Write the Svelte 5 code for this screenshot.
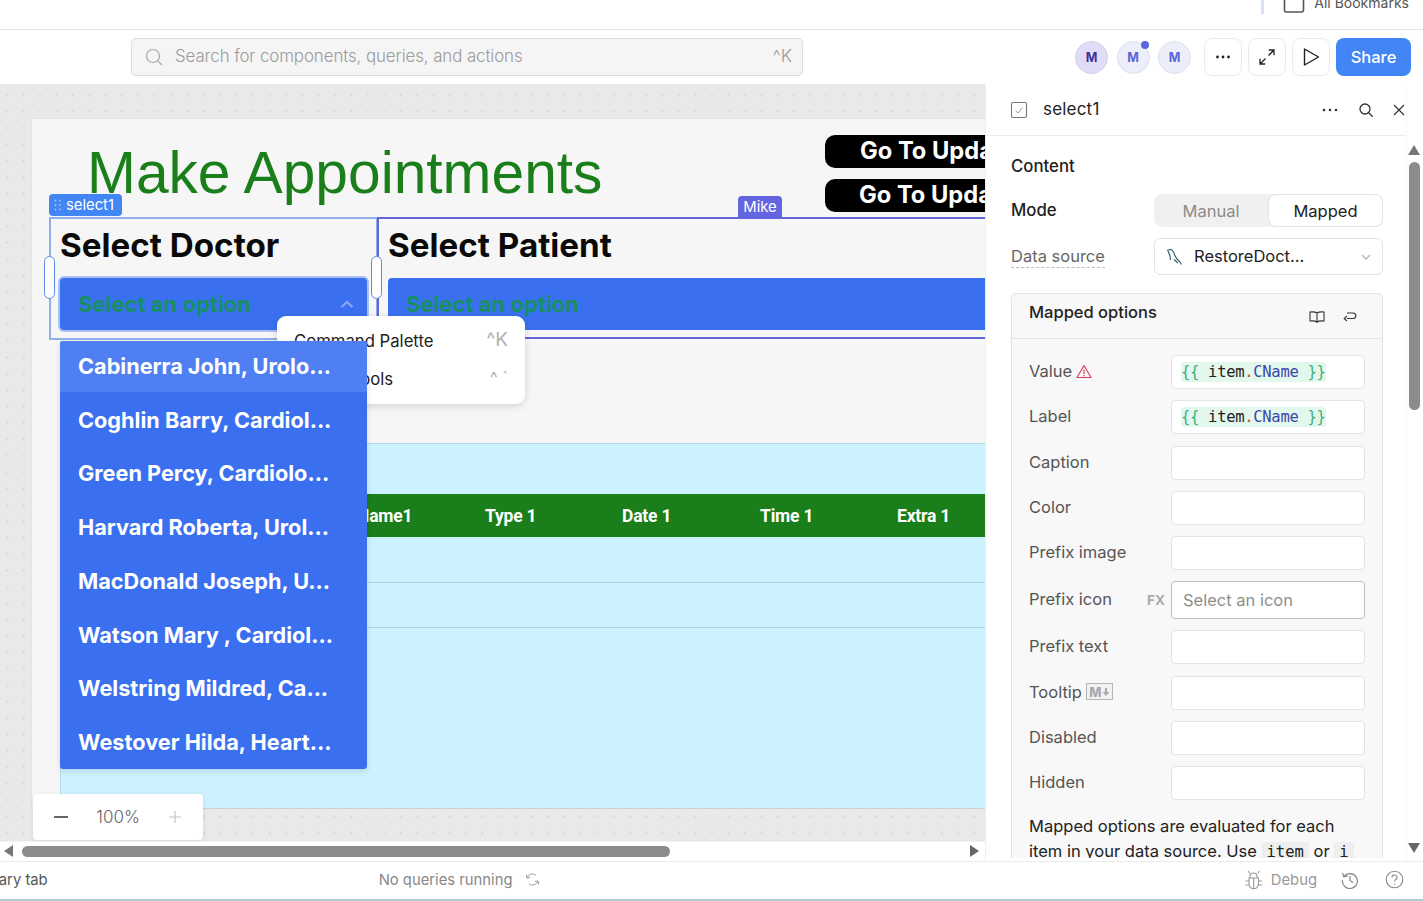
<script>
  const doctors = ['Cabinerra John, Urolo...','Coghlin Barry, Cardiol...','Green Percy, Cardiolo...','Harvard Roberta, Urol...','MacDonald Joseph, U...','Watson Mary , Cardiol...','Welstring Mildred, Ca...','Westover Hilda, Heart...'];
  const cols = [['Name1',357],['Type 1',485],['Date 1',622],['Time 1',760],['Extra 1',897]];
  const rows = ['Caption','Color','Prefix image'];
  const rows2 = ['Disabled','Hidden'];
</script>

<div class="page">
  <div class="browser">
    <div class="bm-sep"></div>
    <svg class="bm-ico" width="22" height="14" viewBox="0 0 22 14"><path d="M1.500 0v10a2 2 0 0 0 2 2h15a2 2 0 0 0 2-2V0" fill="none" stroke="#555" stroke-width="1.600"/></svg>
    <span class="bm-text">All Bookmarks</span>
  </div>

  <header class="top">
    <div class="search">
      <svg width="20" height="20" viewBox="0 0 20 20" fill="none" stroke="#a8a8a8" stroke-width="1.200"><circle cx="9" cy="9" r="6.500"/><path d="M13.800 13.800 18 18"/></svg>
      <span class="s-text">Search for components, queries, and actions</span>
      <span class="s-key">^K</span>
    </div>
    <div class="avatars">
      <div class="av av1">M</div>
      <div class="av av2">M<i class="dot"></i></div>
      <div class="av av2">M</div>
    </div>
    <div class="tools">
      <button class="tb"><svg width="16" height="4" viewBox="0 0 16 4" fill="#222"><circle cx="2.500" cy="2" r="1.400"/><circle cx="8" cy="2" r="1.400"/><circle cx="13.500" cy="2" r="1.400"/></svg></button>
      <button class="tb"><svg width="18" height="18" viewBox="0 0 18 18" fill="none" stroke="#222" stroke-width="1.300"><path d="M2 16 7.500 10.500M10.500 7.500 16 2M10.800 2H16V7.200M2 10.800V16H7.200"/></svg></button>
      <button class="tb"><svg width="18" height="20" viewBox="0 0 18 20" fill="none" stroke="#222" stroke-width="1.400" stroke-linejoin="round"><path d="M2.500 2v16L16.500 10z"/></svg></button>
      <button class="share">Share</button>
    </div>
  </header>

  <div class="main">
    <div class="left">
      <div class="canvas">
        <div class="frame"></div>
        <div class="title">Make Appointments</div>
        <div class="go go1"><span>Go To Update Appointment</span></div>
        <div class="go go2"><span>Go To Update Patient Info</span></div>

        <div class="box doc-box">
          <div class="h-sel">Select Doctor</div>
        </div>
        <div class="box pat-box">
          <div class="h-sel">Select Patient</div>
        </div>

        <div class="sel sel-doc">
          <span>Select an option</span>
          <svg width="14" height="8" viewBox="0 0 14 8" fill="none" stroke="#8aa8f0" stroke-width="2.200"><path d="M1.500 7 7 2l5.500 5"/></svg>
        </div>
        <div class="sel sel-pat"><span>Select an option</span></div>

        <div class="tag tag-sel">
          <svg width="8" height="12" viewBox="0 0 8 12" fill="#a9c4f7"><circle cx="1.500" cy="1.500" r=".9"/><circle cx="6" cy="1.500" r=".9"/><circle cx="1.500" cy="6" r=".9"/><circle cx="6" cy="6" r=".9"/><circle cx="1.500" cy="10.500" r=".9"/><circle cx="6" cy="10.500" r=".9"/></svg>
          select1
        </div>
        <div class="tag tag-mike">Mike</div>
        <div class="handle h1"></div>
        <div class="handle h2"></div>

        <div class="table">
          <div class="thead">
            {#each cols as c}<span style="left:{c[1] - 60}px">{c[0]}</span>{/each}
          </div>
          <div class="tline l1"></div>
          <div class="tline l2"></div>
        </div>

        <div class="menu">
          <div class="mi"><span>Command Palette</span><em>^K</em></div>
          <div class="mi"><span>Debug Tools</span><em class="small">^ `</em></div>
        </div>

        <div class="drop">
          {#each doctors as d, i}
            <div class="opt" class:first={i === 0}>{d}</div>
          {/each}
        </div>

        <div class="zoom">
          <svg width="14" height="2" viewBox="0 0 14 2"><rect width="14" height="2" fill="#666"/></svg>
          <span>100%</span>
          <svg width="14" height="14" viewBox="0 0 14 14" stroke="#c4c4c4" stroke-width="1.200"><path d="M7 1v12M1 7h12"/></svg>
        </div>
      </div>
      <div class="hscroll">
        <i class="arr-l"></i>
        <div class="hthumb"></div>
        <i class="arr-r"></i>
      </div>
    </div>

    <aside class="panel">
      <div class="p-scroll">
        <div class="p-head">
          <svg width="18" height="18" viewBox="0 0 18 18" fill="none"><rect x="1.500" y="1.500" width="15" height="15" rx="1.500" stroke="#777" stroke-width="1.100"/><path d="M5.500 9.500 8 12l4.500-5.500" stroke="#999" stroke-width="1"/></svg>
          <span class="p-name">select1</span>
          <svg width="16" height="4" viewBox="0 0 16 4" fill="#333"><circle cx="2" cy="2" r="1.300"/><circle cx="8" cy="2" r="1.300"/><circle cx="14" cy="2" r="1.300"/></svg>
          <svg class="ph-search" width="16" height="16" viewBox="0 0 16 16" fill="none" stroke="#333" stroke-width="1.300"><circle cx="7" cy="7" r="5"/><path d="m10.700 10.700 4 4"/></svg>
          <svg class="ph-x" width="12" height="12" viewBox="0 0 12 12" fill="none" stroke="#333" stroke-width="1.200"><path d="m1 1 10 10M11 1 1 11"/></svg>
        </div>
        <div class="p-body">
          <div class="sec">Content</div>
          <div class="line mode">
            <span class="lb-dark">Mode</span>
            <div class="seg"><span class="seg-off">Manual</span><span class="seg-on">Mapped</span></div>
          </div>
          <div class="line ds">
            <span class="lb-dash">Data source</span>
            <div class="ds-sel">
              <svg width="18" height="20" viewBox="0 0 18 20" fill="none" stroke="#2f5d6b" stroke-width="1.100"><path d="M2 3.500 5.500 2.500c2 .5 3.200 2.500 4 5 .8 2.500 2.500 5 5 7l2 3M3 4l2 5 .5 4M9 12.500l4 3.500"/></svg>
              <span>RestoreDoct...</span>
              <svg class="chev" width="10" height="6" viewBox="0 0 10 6" fill="none" stroke="#b5b5b5" stroke-width="1.300"><path d="m1 1 4 4 4-4"/></svg>
            </div>
          </div>

          <div class="mapped">
            <div class="m-head">
              <span>Mapped options</span>
              <svg class="m-book" width="16" height="14" viewBox="0 0 16 14" fill="none" stroke="#333" stroke-width="1.100"><path d="M8 3C6.500 1.800 3.500 1.800 1 2v9c2.500-.2 5.500-.2 7 1 1.500-1.200 4.500-1.200 7-1V2c-2.500-.2-5.500-.2-7 1zM8 3v10"/></svg>
              <svg width="14" height="12" viewBox="0 0 14 12" fill="none" stroke="#333" stroke-width="1.100"><path d="M4 7.500H10.500a2.800 2.800 0 0 0 0-5.500H4M4 5 1.200 7.500 4 10"/></svg>
            </div>
            <div class="m-body">
              <div class="row r-code">
                <span class="lab">Value
                  <svg width="16" height="15" viewBox="0 0 16 15" fill="none" stroke="#d8405e" stroke-width="1.200"><path d="M8 1.500 1 13.500h14z" stroke-linejoin="round"/><path d="M8 5.500v4.500M8 11v1.200"/></svg>
                </span>
                <div class="inp"><code class="tpl"><b>&#123;&#123;</b> item<s>.</s><u>CName</u> <b>&#125;&#125;</b></code></div>
              </div>
              <div class="row r-code">
                <span class="lab">Label</span>
                <div class="inp"><code class="tpl"><b>&#123;&#123;</b> item<s>.</s><u>CName</u> <b>&#125;&#125;</b></code></div>
              </div>
              {#each rows as r}
                <div class="row"><span class="lab">{r}</span><div class="inp"></div></div>
              {/each}
              <div class="row r-icon">
                <span class="lab">Prefix icon</span>
                <span class="fx">FX</span>
                <div class="inp inp-icon">Select an icon</div>
              </div>
              <div class="row"><span class="lab">Prefix text</span><div class="inp"></div></div>
              <div class="row">
                <span class="lab">Tooltip
                  <span class="md">M<svg width="8" height="10" viewBox="0 0 8 10" fill="#aaa"><path d="M3 1h2v4h2.500L4 9 .5 5H3z"/></svg></span>
                </span>
                <div class="inp"></div>
              </div>
              {#each rows2 as r}
                <div class="row"><span class="lab">{r}</span><div class="inp"></div></div>
              {/each}
              <p class="note">Mapped options are evaluated for each item in your data source. Use <code>item</code> or <code>i</code></p>
            </div>
          </div>
        </div>
      </div>
      <div class="vscroll">
        <i class="arr-u"></i>
        <div class="vthumb"></div>
        <i class="arr-d"></i>
      </div>
    </aside>
  </div>

  <footer class="foot">
    <span class="f-left">Primary tab</span>
    <span class="f-q">No queries running</span>
    <svg class="f-sync" width="15" height="15" viewBox="0 0 15 15" fill="none" stroke="#999" stroke-width="1"><path d="M2 6c.8-2.500 3-4 5.500-4 1.500 0 2.500.5 3.500 1.500M1.500 2.500 2 6l3-.5M13 9c-.8 2.500-3 4-5.500 4-1.500 0-2.500-.5-3.500-1.500M13.500 12.500 13 9l-3 .5"/></svg>
    <span class="f-grow"></span>
    <svg width="19" height="20" viewBox="0 0 19 20" fill="none" stroke="#999" stroke-width="1.100"><path d="M5 8h9.500v6a4.700 4.700 0 0 1-9.500 0zM6 8V6.500a3.500 3.500 0 0 1 7 0V8M9.700 8v11M5 11H1.500M14.500 11H18M5 15H1.500M14.500 15H18M6 3.500 4 1M13.500 3.500 15.500 1"/></svg>
    <span class="f-debug">Debug</span>
    <svg class="f-hist" width="18" height="18" viewBox="0 0 18 18" fill="none" stroke="#888" stroke-width="1.200"><path d="M3 5.500A7.500 7.500 0 1 1 1.500 9M1.500 2l1.300 3.800 3.800-.6M9 5v4.500l3 2"/></svg>
    <svg class="f-help" width="19" height="19" viewBox="0 0 19 19" fill="none" stroke="#888" stroke-width="1.100"><circle cx="9.500" cy="9.500" r="8.300"/><path d="M7 7.500a2.500 2.500 0 1 1 3.600 2.200c-.8.400-1.100.9-1.100 1.800M9.500 13.500v1.200"/></svg>
  </footer>
</div>

<style>
  :global(body) { margin: 0; background: #fff; }
  .page { width: 1423px; height: 901px; overflow: hidden; display: flex; flex-direction: column; font-family: Inter, "Liberation Sans", sans-serif; color: #222; position: relative; }

  .browser { flex: none; height: 29px; border-bottom: 1px solid #e4e4e4; display: flex; justify-content: flex-end; align-items: flex-start; padding-right: 14px; box-sizing: content-box; overflow: hidden; }
  .bm-sep { width: 3px; height: 14px; background: #d5e2f7; margin-right: 19px; }
  .bm-ico { margin-right: 9px; }
  .bm-text { font-size: 14px; line-height: 14px; margin-top: -4px; color: #555; }

  .top { flex: none; height: 54px; display: flex; align-items: center; box-sizing: border-box; padding: 0 0 0 131px; }
  .search { flex: none; width: 672px; height: 38px; box-sizing: border-box; background: #f5f5f5; border: 1px solid #dcdcdc; border-radius: 5px; display: flex; align-items: center; padding: 0 10px 0 12px; gap: 11px; color: #9b9b9b; font-weight: 300; }
  .s-text { flex: 1; font-size: 16.900px; letter-spacing: -.1px; margin-top: -2px; }
  .s-key { font-size: 17.500px; color: #999; margin-top: -3px; }
  .avatars { flex: none; display: flex; gap: 8.500px; margin-left: 272px; }
  .av { width: 33px; height: 33px; box-sizing: border-box; border-radius: 50%; display: flex; align-items: center; justify-content: center; font-size: 12.500px; font-weight: 700; position: relative; }
  .av1 { background: #e0dcf7; border: 1px solid #d2cfe6; color: #3f2f96; }
  .av2 { background: #eceef9; border: 1px solid #dde0ee; color: #5b63d8; }
  .dot { position: absolute; width: 8px; height: 8px; border-radius: 50%; background: #5d64e0; right: 0; top: -1px; }
  .tools { flex: none; display: flex; gap: 6px; margin-left: 13px; }
  .tb { width: 38px; height: 38px; box-sizing: border-box; background: #fff; border: 1px solid #eaeaea; border-radius: 8px; display: flex; align-items: center; justify-content: center; padding: 0; }
  .share { width: 75px; height: 38px; border: 0; border-radius: 8px; background: #4285f4; color: #fff; font: 500 16.500px Inter, sans-serif; padding: 0 0 1px; }

  .main { flex: 1; display: flex; min-height: 0; }
  .left { flex: 1; min-width: 0; display: flex; flex-direction: column; }
  .canvas { flex: 1; position: relative; overflow: hidden; background-color: #e9e9e9; background-image: radial-gradient(circle, #d8d8d8 0.9px, transparent 1.300px); background-size: 16.400px 16.400px; background-position: -1px 3px; }
  .hscroll { height: 20px; background: #fff; position: relative; border-top: 1px solid #f3f3f3; box-sizing: border-box; }
  .hthumb { position: absolute; left: 22px; top: 4px; width: 648px; height: 11px; border-radius: 6px; background: #8c8c8c; }
  .arr-l { position: absolute; left: 4px; top: 3px; border: 6px solid transparent; border-left: 0; border-right: 9px solid #777; }
  .arr-r { position: absolute; left: 970px; top: 3px; border: 6px solid transparent; border-right: 0; border-left: 9px solid #666; }

  .frame { position: absolute; left: 31px; top: 34px; width: 960px; height: 690px; background: #f6f6f6; border: 1px solid #e5e5e5; box-sizing: border-box; }
  .title { position: absolute; left: 87px; top: 54px; font: 400 58.700px/70px "Liberation Sans", Arial, sans-serif; color: #1a7f1a; white-space: nowrap; }
  .go { position: absolute; left: 825px; width: 400px; height: 33px; background: #000; border-radius: 10px; color: #fff; font-weight: 700; font-size: 23.700px; line-height: 31px; white-space: nowrap; box-sizing: border-box; }
  .go1 { top: 51px; padding-left: 35px; }
  .go2 { top: 95px; padding-left: 34px; }

  .box { position: absolute; box-sizing: border-box; }
  .doc-box { left: 49px; top: 133px; width: 329px; height: 123px; border: 2px solid #8fb0e8; padding: 7px 0 0 9px; }
  .pat-box { left: 377px; top: 133px; width: 660px; height: 122px; border: 2px solid #6366d8; border-right: 0; padding: 7px 0 0 9px; }
  .h-sel { font-size: 33.200px; font-weight: 700; line-height: 39px; color: #0a0a0a; white-space: nowrap; }
  .sel { position: absolute; top: 194px; height: 52px; background: #3a70f0; box-sizing: border-box; border-radius: 4px; color: #17905f; font-weight: 700; font-size: 22px; display: flex; align-items: center; padding-left: 18px; justify-content: space-between; }
  .sel-doc { left: 60px; width: 307px; padding-right: 13px; box-shadow: 0 0 0 2px #a8c2f3; }
  .sel-pat { left: 388px; width: 640px; }
  .tag { position: absolute; box-sizing: border-box; color: #fff; font-size: 14.800px; display: flex; align-items: center; border-radius: 4px 4px 0 0; }
  .tag-sel { left: 49px; top: 110px; width: 73px; height: 22px; background: #4285f4; border-radius: 4px; padding-left: 5px; gap: 4px; }
  .tag-mike { left: 738px; top: 112px; width: 44px; height: 22px; background: #6366e0; justify-content: center; }
  .handle { position: absolute; top: 172px; width: 11px; height: 43px; background: #fff; border: 1px solid #5c8ae6; border-radius: 6px; box-sizing: border-box; }
  .h1 { left: 44px; }
  .h2 { left: 371px; }

  .table { position: absolute; left: 60px; top: 359px; width: 960px; height: 366px; background: #ccf2ff; border-top: 1px solid #b9d6e6; border-left: 1px solid #b9d6e6; border-bottom: 1px solid #cfcfcf; box-sizing: border-box; }
  .thead { position: absolute; left: -1px; right: 0; top: 50px; height: 43px; background: #1a7f1a; color: #fff; font: 700 17.500px/44px Roboto, sans-serif; letter-spacing: -.2px; }
  .thead span { position: absolute; top: 0; }
  .tline { position: absolute; left: 0; right: 0; height: 1px; background: #add5e6; }
  .l1 { top: 138px; }
  .l2 { top: 183px; }

  .menu { position: absolute; left: 277px; top: 232px; width: 248px; height: 88px; background: #fff; border-radius: 9px; box-shadow: 0 2px 8px rgba(0,0,0,.14); padding: 6px 17px 4px; box-sizing: border-box; font-size: 16.700px; }
  .mi { height: 38px; display: flex; justify-content: space-between; align-items: center; }
  .mi em { font-style: normal; color: #b0b0b0; font-size: 19px; margin-top: -3px; }
  .mi em.small { font-size: 17px; }

  .drop { position: absolute; left: 60px; top: 257px; width: 307px; height: 428px; background: #3a70f0; border-radius: 3px; box-shadow: 0 2px 6px rgba(0,0,0,.12); overflow: hidden; }
  .opt { height: 53.700px; box-sizing: border-box; padding-left: 18px; color: #fff; font-weight: 700; font-size: 21.700px; line-height: 51px; white-space: nowrap; }
  .opt.first { background: #4f7ff2; height: 51px; margin-bottom: 2.800px; }

  .zoom { position: absolute; left: 33px; top: 710px; width: 170px; height: 46px; background: #fff; border-radius: 4px; box-shadow: 0 1px 4px rgba(0,0,0,.1); display: flex; align-items: center; padding: 0 21px; box-sizing: border-box; justify-content: space-between; color: #666; font-size: 17px; font-weight: 300; }

  .panel { width: 438px; background: #fff; border-left: 1px solid #eee; box-sizing: border-box; display: flex; position: relative; z-index: 2; }
  .p-scroll { width: 420px; height: 774px; overflow: hidden; }
  .vscroll { flex: 1; position: relative; background: #fff; border-left: 1px solid #f6f6f6; }
  .vthumb { position: absolute; left: 2px; top: 78px; width: 11px; height: 248px; border-radius: 6px; background: #8c8c8c; }
  .arr-u { position: absolute; left: 1px; top: 61px; border: 6.500px solid transparent; border-top: 0; border-bottom: 10px solid #777; }
  .arr-d { position: absolute; left: 1px; top: 759px; border: 6.500px solid transparent; border-bottom: 0; border-top: 10px solid #666; }

  .p-head { height: 52px; border-bottom: 1px solid #ececec; display: flex; align-items: center; padding: 0 1px 0 24px; box-sizing: border-box; }
  .p-head svg { flex: none; }
  .p-name { font-size: 17px; margin: -2px 0 0 15px; flex: 1; letter-spacing: .2px; color: #222; }
  .ph-search { margin-left: 20px; }
  .ph-x { margin-left: 19px; }

  .p-body { padding: 0 23px 0 25px; }
  .sec { font-size: 16.800px; font-weight: 500; height: 61px; line-height: 60px; color: #222; }
  .line { display: flex; align-items: center; justify-content: space-between; }
  .mode { height: 33px; margin-top: -3px; }
  .lb-dark { font-size: 16.800px; font-weight: 500; color: #222; margin-top: -2px; }
  .seg { width: 229px; height: 33px; box-sizing: border-box; background: #f0f0f0; border-radius: 8px; display: flex; font-size: 16.500px; }
  .seg-off { width: 114px; display: flex; align-items: center; justify-content: center; color: #8a8a8a; }
  .seg-on { flex: 1; background: #fff; border: 1px solid #e4e4e4; border-radius: 8px; display: flex; align-items: center; justify-content: center; color: #222; }
  .ds { height: 37px; margin-top: 11px; }
  .lb-dash { font-size: 16.500px; color: #666; border-bottom: 1px dashed #bbb; line-height: 21px; }
  .ds-sel { width: 229px; height: 37px; box-sizing: border-box; border: 1px solid #e4e4e4; border-radius: 6px; display: flex; align-items: center; padding: 0 11px 0 10px; gap: 11px; font-size: 16.500px; color: #222; }
  .ds-sel span { flex: 1; margin-top: -2px; }
  .chev { flex: none; }

  .mapped { margin-top: 18px; width: 372px; box-sizing: border-box; border: 1px solid #e4e4e4; border-radius: 5px 5px 0 0; border-bottom: 0; background: #f8f8f8; }
  .m-head { height: 45px; border-bottom: 1px solid #e4e4e4; display: flex; align-items: center; padding: 0 25px 0 17px; box-sizing: border-box; font-size: 16.500px; font-weight: 500; color: #222; }
  .m-head span { flex: 1; margin-top: -8px; }
  .m-head svg { margin-top: 2px; }
  .m-book { margin-right: 18px; }
  .m-body { padding: 16px 17px 0; }
  .row { height: 34px; display: flex; align-items: center; margin-bottom: 11.300px; position: relative; }
  .lab { flex: 1; font-size: 16.500px; color: #555; display: flex; align-items: center; gap: 4px; margin-top: -2px; }
  .inp { width: 194px; height: 34px; box-sizing: border-box; background: #fff; border: 1px solid #e4e4e4; border-radius: 4px; display: flex; align-items: center; padding-left: 9px; }
  .tpl { background: #e3f8ec; border-radius: 3px; font: 15.500px/20px "DejaVu Sans Mono", monospace; color: #222; white-space: pre; letter-spacing: -.3px; }
  .tpl b { font-weight: 400; color: #3fae7e; }
  .tpl s { text-decoration: none; color: #c0562a; }
  .tpl u { text-decoration: none; color: #3c47ad; }
  .r-icon { height: 38px; margin-bottom: 11px; }
  .fx { position: absolute; left: 118px; font-size: 13.500px; font-weight: 700; color: #aaa; }
  .inp-icon { height: 38px; border: 1px solid #bdbdbd; padding-left: 11px; font-size: 16.500px; color: #8e8e8e; }
  .md { display: inline-flex; align-items: center; justify-content: center; border: 1px solid #b5b5b5; width: 27px; height: 17px; box-sizing: border-box; font-size: 13px; font-weight: 800; color: #aaa; background: #f2f2f2; }
  .note { margin: 14px 0 0; font-size: 16.500px; line-height: 25px; color: #222; }
  .note code { font: 15.500px "DejaVu Sans Mono", monospace; background: #eee; border-radius: 3px; padding: 1px 5px; }

  .foot { flex: none; height: 40px; box-sizing: border-box; border-top: 1px solid #ececec; border-bottom: 2px solid #b5c9d4; display: flex; align-items: center; font-size: 14.800px; color: #888; padding: 0 19px 2px 0; }
  .f-left { margin-left: -33px; color: #555; }
  .f-q { margin-left: 331px; color: #888; }
  .f-sync { margin-left: 13px; }
  .f-grow { flex: 1; }
  .f-debug { margin-left: 8px; color: #999; }
  .f-hist { margin-left: 24px; }
  .f-help { margin-left: 26px; }
</style>
